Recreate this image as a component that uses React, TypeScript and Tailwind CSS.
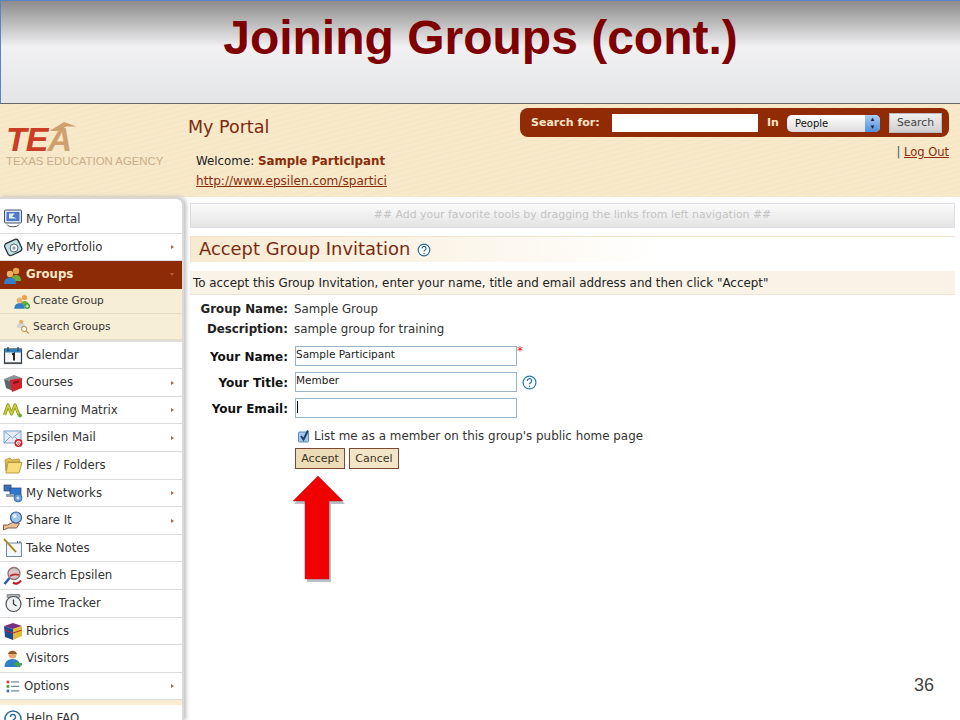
import React from 'react';

const verdana = "font-['DejaVu_Sans',sans-serif]";

function Svg({ children, className = 'w-[20px] h-[20px]' }: { children: React.ReactNode; className?: string }) {
    return (
        <svg viewBox="0 0 20 20" className={`shrink-0 ${className}`}>
            {children}
        </svg>
    );
}

function People({ extra }: { extra?: React.ReactNode }) {
    return (
        <Svg>
            <circle cx="13" cy="6" r="3.2" fill="#e8a34c" />
            <path d="M8 16c0-4 2-6 5-6s5 2 5 6z" fill="#6fae3d" />
            <circle cx="7" cy="9" r="3.2" fill="#eeb06a" />
            <path d="M1 19c0-4 2-6.500 6-6.500s6 2.500 6 6.500z" fill="#2f7fc9" />
            {extra}
        </Svg>
    );
}

const icons: Record<string, React.ReactNode> = {
    portal: (
        <Svg>
            <rect x="1.500" y="1" width="17" height="13" rx="1" fill="#dfe6f2" stroke="#44536e" />
            <rect x="3.500" y="3" width="13" height="9" fill="#4d79c7" />
            <path d="M6 4.500h6l-3 3 5 2H6z" fill="#e6edf7" />
            <path d="M4 15.500c1 3 11 3 12 0" stroke="#555" fill="none" />
        </Svg>
    ),
    eportfolio: (
        <Svg>
            <rect x="2.500" y="4" width="15" height="13" rx="3" transform="rotate(-25 10 10)" fill="#bfe0e4" stroke="#26343a" strokeWidth="1.300" />
            <circle cx="11" cy="11" r="4" fill="#f2f4f6" stroke="#5a6a72" />
            <circle cx="11" cy="11" r="1.500" fill="#7f98a8" />
        </Svg>
    ),
    create: <People extra={<><circle cx="16" cy="16" r="3.500" fill="#3e9a35" /><path d="M16 14v4M14 16h4" stroke="#fff" /></>} />,
    searchGroups: (
        <Svg>
            <path d="M4 12c0-4 2-6 5-6s5 2 5 6z" fill="#cfd5d8" />
            <circle cx="9" cy="5" r="2.500" fill="#e2ad69" />
            <circle cx="12.500" cy="13.500" r="3" fill="#fff" stroke="#c9924a" strokeWidth="1.200" />
            <path d="M15 16l3 3" stroke="#c9924a" strokeWidth="1.500" />
        </Svg>
    ),
    calendar: (
        <Svg>
            <rect x="1.500" y="4" width="17" height="14.500" fill="#f4f6f7" stroke="#2c3e4a" strokeWidth="1.200" />
            <rect x="1.500" y="4" width="17" height="3.500" fill="#2e7fb8" />
            <path d="M5 2v4M15 2v4" stroke="#2c3e4a" strokeWidth="1.300" />
            <path d="M9 9.500l2-1v7" stroke="#111" strokeWidth="1.800" fill="none" />
            <path d="M1.500 18h17" stroke="#555" strokeWidth="1.500" />
        </Svg>
    ),
    courses: (
        <Svg>
            <path d="M1 6l10-4 8 3-9 4z" fill="#8b9498" />
            <path d="M1 6l9 3v9l-7-3z" fill="#5d6669" />
            <path d="M7 7l12-2v10l-10 4z" fill="#d2232a" />
            <path d="M10 9l6-1.500v2L10 11z" fill="#7f1218" />
        </Svg>
    ),
    matrix: (
        <Svg>
            <path d="M1.500 15L5 5l3.500 9L12 5l4 10" stroke="#8a9a1e" strokeWidth="3.200" fill="none" strokeLinejoin="round" />
            <path d="M1.500 15L5 5l3.500 9L12 5l4 10" stroke="#d7d23a" strokeWidth="1.400" fill="none" strokeLinejoin="round" />
            <circle cx="17" cy="15.500" r="2" fill="#6fa82a" />
        </Svg>
    ),
    mail: (
        <Svg>
            <rect x="1" y="3" width="17" height="12" fill="#e3ecf7" stroke="#7ea2cf" />
            <path d="M1 3l8.500 7L18 3M1 15l6-6M18 15l-6-6" stroke="#7ea2cf" fill="none" />
            <circle cx="15.500" cy="15" r="4" fill="#c8202a" />
            <path d="M13.500 15h4M17.500 15a2 2 0 1 0-.6 1.500" stroke="#fff" fill="none" />
        </Svg>
    ),
    files: (
        <Svg>
            <path d="M2 5l5-2 2 2 7-1 1 3H4l-1 9z" fill="#e6c35a" stroke="#a98a2c" strokeWidth=".8" />
            <path d="M3 18L5 7.500h14L16 18z" fill="#f7dc79" stroke="#a98a2c" strokeWidth=".8" />
        </Svg>
    ),
    networks: (
        <Svg>
            <rect x="1" y="2" width="7" height="6" fill="#3f6fb5" stroke="#26406e" strokeWidth=".7" />
            <rect x="7" y="5" width="11" height="8" fill="#2f78d0" stroke="#26406e" strokeWidth=".7" />
            <path d="M3 11h8v3H3z" fill="#8ea2b8" />
            <circle cx="15" cy="15" r="4" fill="#5d9bd8" stroke="#3c5f8a" strokeWidth=".7" />
            <circle cx="15" cy="15" r="1.500" fill="#d6e6f5" />
        </Svg>
    ),
    share: (
        <Svg>
            <path d="M0.500 14h4l5-2.500 7 1-3 4.500H5l-4.500 2z" fill="#eebd91" stroke="#5b4433" strokeWidth=".8" />
            <circle cx="13" cy="6.500" r="5.500" fill="#9fc6ea" stroke="#2d5d93" strokeWidth="1.200" />
            <circle cx="11.500" cy="5" r="2" fill="#e2eff9" />
        </Svg>
    ),
    notes: (
        <Svg>
            <rect x="3.500" y="5" width="15" height="13.500" fill="#f3f7fb" stroke="#6d88a6" />
            <path d="M1 1l12 13" stroke="#c9a93a" strokeWidth="2.200" />
            <path d="M1 1l12 13" stroke="#655019" strokeWidth=".6" />
            <path d="M14 4h1M16.500 4h1" stroke="#555" strokeWidth="2" />
        </Svg>
    ),
    searchEpsilen: (
        <Svg>
            <circle cx="11" cy="7.500" r="6" fill="#d9c4c6" stroke="#8a7275" strokeWidth="1.300" />
            <path d="M7 10c3-2 6-2 9-1" stroke="#bf2b2f" strokeWidth="1.600" fill="none" />
            <path d="M6.500 12L1.500 18" stroke="#2b62a8" strokeWidth="2.600" />
            <path d="M10 16.500c3 2 6 1 8-2" stroke="#bd1c22" strokeWidth="2.200" fill="none" />
        </Svg>
    ),
    timer: (
        <Svg>
            <rect x="4" y="1.500" width="13" height="3" rx="1" fill="#aeb2b5" stroke="#555" strokeWidth=".6" />
            <circle cx="10.500" cy="11" r="7.500" fill="#f0f1f2" stroke="#4d5357" strokeWidth="1.200" />
            <path d="M10.500 6.500V11l3 2" stroke="#333" strokeWidth="1.200" fill="none" />
        </Svg>
    ),
    rubrics: (
        <Svg>
            <path d="M1 5l9-3 9 3-9 3z" fill="#7c2f7f" />
            <path d="M1 5l9 3v11l-8-3z" fill="#1e4c93" />
            <path d="M10 8l9-3v10l-9 4z" fill="#e2bb3a" />
            <path d="M1.500 9l8.500 3 9-3" stroke="#b92c2c" fill="none" />
        </Svg>
    ),
    visitors: (
        <Svg>
            <circle cx="9.500" cy="5.500" r="4" fill="#e9a76a" />
            <path d="M5 5c1-4 8-4 9 0z" fill="#8a5a2c" />
            <path d="M1.500 18c0-5 3-8 8-8s8 3 8 8z" fill="#2f7fc9" />
            <path d="M11 15l4-3v2h4v2.500h-4v2z" fill="#4aa640" />
        </Svg>
    ),
    options: (
        <Svg className="w-[18px] h-[18px]">
            <rect x="4" y="4" width="3" height="3" fill="#d63d3d" />
            <rect x="4" y="9" width="3" height="3" fill="#4a9a3f" />
            <rect x="4" y="14" width="3" height="3" fill="#3f6fb5" />
            <path d="M9 5.500h9M9 10.500h9M9 15.500h9" stroke="#6d8a9c" strokeWidth="1.300" />
        </Svg>
    ),
    help: (
        <Svg>
            <circle cx="10" cy="10" r="8" fill="#fff" stroke="#2c6c9c" strokeWidth="1.500" />
            <path d="M7.500 8a2.500 2.500 0 1 1 3.500 2.300c-.7.400-1 .9-1 1.700M10 14v1.500" stroke="#2c6c9c" strokeWidth="1.500" fill="none" />
        </Svg>
    ),
};

const navTop = [
    { label: 'My Portal', icon: 'portal' },
    { label: 'My ePortfolio', icon: 'eportfolio', arrow: true },
];

const navBottom = [
    { label: 'Calendar', icon: 'calendar' },
    { label: 'Courses', icon: 'courses', arrow: true },
    { label: 'Learning Matrix', icon: 'matrix', arrow: true },
    { label: 'Epsilen Mail', icon: 'mail', arrow: true },
    { label: 'Files / Folders', icon: 'files' },
    { label: 'My Networks', icon: 'networks', arrow: true },
    { label: 'Share It', icon: 'share', arrow: true },
    { label: 'Take Notes', icon: 'notes' },
    { label: 'Search Epsilen', icon: 'searchEpsilen' },
    { label: 'Time Tracker', icon: 'timer' },
    { label: 'Rubrics', icon: 'rubrics' },
    { label: 'Visitors', icon: 'visitors' },
    { label: 'Options', icon: 'options', arrow: true },
];

function NavRow({ label, icon, arrow }: { label: string; icon: string; arrow?: boolean }) {
    return (
        <div className="h-[27.6px] flex items-center pl-[3px] pr-[8px] gap-[3px] border-b border-[#dcdcdc] text-[11.750px] text-[#333]">
            {icons[icon]}
            <span className="flex-1 pt-[1px]">{label}</span>
            {arrow && <span className="w-0 h-0 border-y-[2.500px] border-y-transparent border-l-[3px] border-l-[#a8684c]" />}
        </div>
    );
}

function SubRow({ label, icon }: { label: string; icon: string }) {
    return (
        <div className="h-[25.500px] flex items-center pl-[12px] gap-[1px] border-b border-[#e6dcc0] text-[10.600px] text-[#333]">
            <span className="scale-[.85] flex">{icons[icon]}</span>
            <span className="pt-[1px]">{label}</span>
        </div>
    );
}

function FieldRow({ label, value, cursor, after }: { label: string; value?: string; cursor?: boolean; after?: React.ReactNode }) {
    return (
        <div className="flex items-center h-[26px]">
            <span className="w-[98px] pt-[1px] text-right font-bold text-[12px] text-[#111]">{label}</span>
            <div className="ml-[7px] w-[222px] h-[20px] border border-[#98b4cc] bg-white text-[10.500px] leading-[14px] text-[#222] flex items-start">
                {value}
                {cursor && <span className="w-px h-[12px] bg-black mt-[2px] ml-[1px]" />}
            </div>
            {after}
        </div>
    );
}

export default function App() {
    return (
        <div className={`relative w-[960px] h-[720px] overflow-hidden flex flex-col bg-white ${verdana}`}>
            {/* Slide title */}
            <div className="h-[104px] shrink-0 border-t border-l border-[#5b84c4] border-b-[#666] bg-gradient-to-b from-[#8c8c8c] via-[#f1f1f3] via-45% to-[#e4e5e6] border-b text-center">
                <h1 className="font-['Liberation_Sans',sans-serif] font-bold text-[48px] leading-[74px] text-[#7f0000]">
                    Joining Groups (cont.)
                </h1>
            </div>

            {/* Portal header */}
            <div className="h-[93px] shrink-0 flex bg-[repeating-linear-gradient(165deg,#f7e9ca_0px,#f7e9ca_2px,#f5e6c4_3px,#f7e9ca_5px)]">
                <div className="w-[188px] shrink-0 pl-[6px] pt-[19px]">
                    <div className="relative flex items-start h-[33px]">
                        <span className="font-['Liberation_Sans',sans-serif] font-black italic text-[34px] leading-[33px] tracking-[-1px] text-[#cc3d26]">TE</span>
                        <span className="font-['Liberation_Sans',sans-serif] font-black italic text-[34px] leading-[33px] text-[#cfa06d]">A</span>
                        <svg viewBox="0 0 24 8" className="absolute left-[42px] -top-[1px] w-[30px] h-[9px]">
                            <path d="M0 8L13 0l11 4H15L7 8z" fill="#cfa06d" />
                        </svg>
                    </div>
                    <div className="font-['Liberation_Sans',sans-serif] text-[11.400px] leading-[14px] -mt-[2px] text-[#c9ad88] whitespace-nowrap">TEXAS EDUCATION AGENCY</div>
                </div>
                <div className="flex-1 flex flex-col">
                    <div className="text-[17.500px] leading-[18px] text-[#7a2a10] mt-[14px]">My Portal</div>
                    <div className="text-[11.850px] leading-[14px] ml-[8px] mt-[18px] text-[#222]">
                        Welcome: <b className="text-[#8a2c0c]">Sample Participant</b>
                    </div>
                    <a className="text-[12.100px] leading-[14px] ml-[8px] mt-[6px] text-[#8a2c0c] underline">http://www.epsilen.com/spartici</a>
                </div>
                <div className="flex flex-col items-end pr-[11px] pt-[4px]">
                    <div className="w-[429px] h-[29px] rounded-[8px] bg-[#902b06] flex items-center pl-[11px] pt-[1px] text-[11px] font-bold text-[#f6e6c6]">
                        <span className="w-[81px] pt-[1px]">Search for:</span>
                        <div className="w-[146px] h-[18px] bg-white" />
                        <span className="ml-[9px] w-[19px] pt-[1px]">In</span>
                        <div className="ml-[1px] w-[93px] h-[17px] rounded-[5px] bg-gradient-to-b from-white to-[#dcdcdc] flex items-center pl-[8px] text-[10px] font-normal text-[#111] overflow-hidden">
                            <span className="flex-1">People</span>
                            <span className="w-[15px] h-[17px] bg-gradient-to-b from-[#a9cdf2] to-[#4f8fdc] text-[7px] leading-[8px] text-center flex flex-col justify-center text-[#123]">
                                <span>▴</span>
                                <span>▾</span>
                            </span>
                        </div>
                        <div className="ml-[9px] w-[53px] h-[20px] bg-gradient-to-b from-[#f0f0f0] to-[#cfcfcf] border border-[#bbb] flex items-center justify-center text-[10.800px] font-normal text-[#444]">Search</div>
                    </div>
                    <div className="text-[11.500px] leading-[14px] mt-[8px] pr-0 text-[#8a2c0c]">
                        <span className="text-[#33627a]">| </span><a className="underline">Log Out</a>
                    </div>
                </div>
            </div>

            {/* Body */}
            <div className="flex-1 min-h-0 flex">
                <aside className="relative w-[184px] shrink-0 bg-white rounded-tr-[8px] border-r-2 border-[#dadada] border-t-2 border-t-[#d6d6d6] shadow-[2px_0_4px_#bbb] pt-[7px]">
                    {navTop.map((n) => (
                        <NavRow key={n.label} {...n} />
                    ))}
                    <div className="h-[27.500px] flex items-center pl-[3px] pr-[8px] gap-[3px] bg-[#8c2b06] text-[11.750px] font-bold text-[#f7e9c9]">
                        <People />
                        <span className="flex-1">Groups</span>
                        <span className="w-0 h-0 border-x-[2.500px] border-x-transparent border-t-[3px] border-t-[#b0603c]" />
                    </div>
                    <div className="bg-[#f7eed6] border-b-2 border-[#dedede]">
                        <SubRow label="Create Group" icon="create" />
                        <SubRow label="Search Groups" icon="searchGroups" />
                    </div>
                    {navBottom.map((n) => (
                        <NavRow key={n.label} {...n} />
                    ))}
                    <div className="h-[5px] bg-[#f9eed4]" />
                    <div className="h-[27.500px] flex items-center pl-[3px] gap-[3px] text-[11.750px] text-[#333]">
                        {icons.help}
                        <span>Help FAQ</span>
                    </div>
                </aside>

                <main className="flex-1 min-w-0 pl-[6px] pr-[5px] pt-[6px]">
                    <div className="h-[25px] border border-[#dcdfe6] bg-gradient-to-b from-[#fbfbfb] to-[#e4e4e4] flex items-center justify-center text-[10.900px] text-[#c4c4c4]">
                        ## Add your favorite tools by dragging the links from left navigation ##
                    </div>
                    <div className="h-[26px] mt-[8px] flex items-center gap-[7px] bg-gradient-to-r from-[#f7ead0] to-white to-[62%] border-t border-l border-[#efe2c8] pl-[8px] text-[17.900px] text-[#7a2a10]">
                        Accept Group Invitation
                        <svg viewBox="0 0 14 14" className="w-[14px] h-[14px]">
                            <circle cx="7" cy="7" r="5.800" fill="#fff" stroke="#2c6c9c" strokeWidth="1.200" />
                            <path d="M5 5.500a2 2 0 1 1 2.800 1.800c-.6.300-.8.700-.8 1.300M7 10v1.200" stroke="#2c6c9c" strokeWidth="1.200" fill="none" />
                        </svg>
                    </div>
                    <div className="h-[24px] mt-[9px] bg-[#f9f2e7] border-b border-[#eee3d0] flex items-center pl-[3px] pt-[2px] text-[11.900px] text-[#222] whitespace-nowrap">
                        To accept this Group Invitation, enter your name, title and email address and then click &quot;Accept&quot;
                    </div>

                    <div className="mt-[4px] pt-[1px] text-[11.800px] text-[#333]">
                        <div className="flex items-center h-[20px]">
                            <span className="w-[98px] text-right font-bold text-[#222]">Group Name:</span>
                            <span className="ml-[6px]">Sample Group</span>
                        </div>
                        <div className="flex items-center h-[20px]">
                            <span className="w-[98px] text-right font-bold text-[#222]">Description:</span>
                            <span className="ml-[6px]">sample group for training</span>
                        </div>
                    </div>
                    <div className="mt-[3px]">
                        <FieldRow
                            label="Your Name:"
                            value="Sample Participant"
                            after={<span className="text-[#e01818] text-[12px] leading-[12px] self-start mt-[2px]">*</span>}
                        />
                        <FieldRow
                            label="Your Title:"
                            value="Member"
                            after={
                                <svg viewBox="0 0 14 14" className="ml-[5px] w-[15px] h-[15px]">
                                    <circle cx="7" cy="7" r="6" fill="#fff" stroke="#2a78b0" strokeWidth="1.100" />
                                    <path d="M5 5.500a2 2 0 1 1 2.800 1.800c-.6.300-.8.700-.8 1.300M7 10v1.200" stroke="#2a78b0" strokeWidth="1.200" fill="none" />
                                </svg>
                            }
                        />
                        <FieldRow label="Your Email:" cursor />
                    </div>
                    <div className="flex items-center ml-[107px] mt-[7px] h-[18px] text-[11.930px] text-[#333] gap-[3px]">
                        <svg viewBox="0 0 14 14" className="w-[14px] h-[14px] -mt-[3px]">
                            <rect x="1.500" y="3" width="10" height="10" rx="1" fill="#a6c8ea" stroke="#5d88b8" />
                            <path d="M4 7l2.500 3.500L11 1.500" stroke="#1f3f6c" strokeWidth="2" fill="none" />
                        </svg>
                        List me as a member on this group&apos;s public home page
                    </div>
                    <div className="flex ml-[105px] mt-[2px] gap-[4px]">
                        <div className="w-[50px] h-[21px] pt-[1px] border border-[#7c4a30] bg-[#ecdcb8] flex items-center justify-center text-[11px] text-[#3d3424]">Accept</div>
                        <div className="w-[50px] h-[21px] pt-[1px] border border-[#7c4a30] bg-[#f3e6c8] flex items-center justify-center text-[11px] text-[#3d3424]">Cancel</div>
                    </div>
                    <svg viewBox="0 0 54 110" className="ml-[102px] mt-[6px] w-[54px] h-[110px]">
                        <path d="M27 1L52 27H38V105H14V27H1z" fill="#7d8aa0" opacity=".55" transform="translate(1 2)" />
                        <path d="M26 1L51 26H37V104H13V26H1z" fill="#f10000" stroke="#b02020" strokeWidth=".5" />
                    </svg>
                </main>
            </div>

            <span className="absolute right-[26px] top-[675px] font-['Liberation_Sans',sans-serif] text-[18px] leading-[20px] text-[#444]">36</span>
        </div>
    );
}
